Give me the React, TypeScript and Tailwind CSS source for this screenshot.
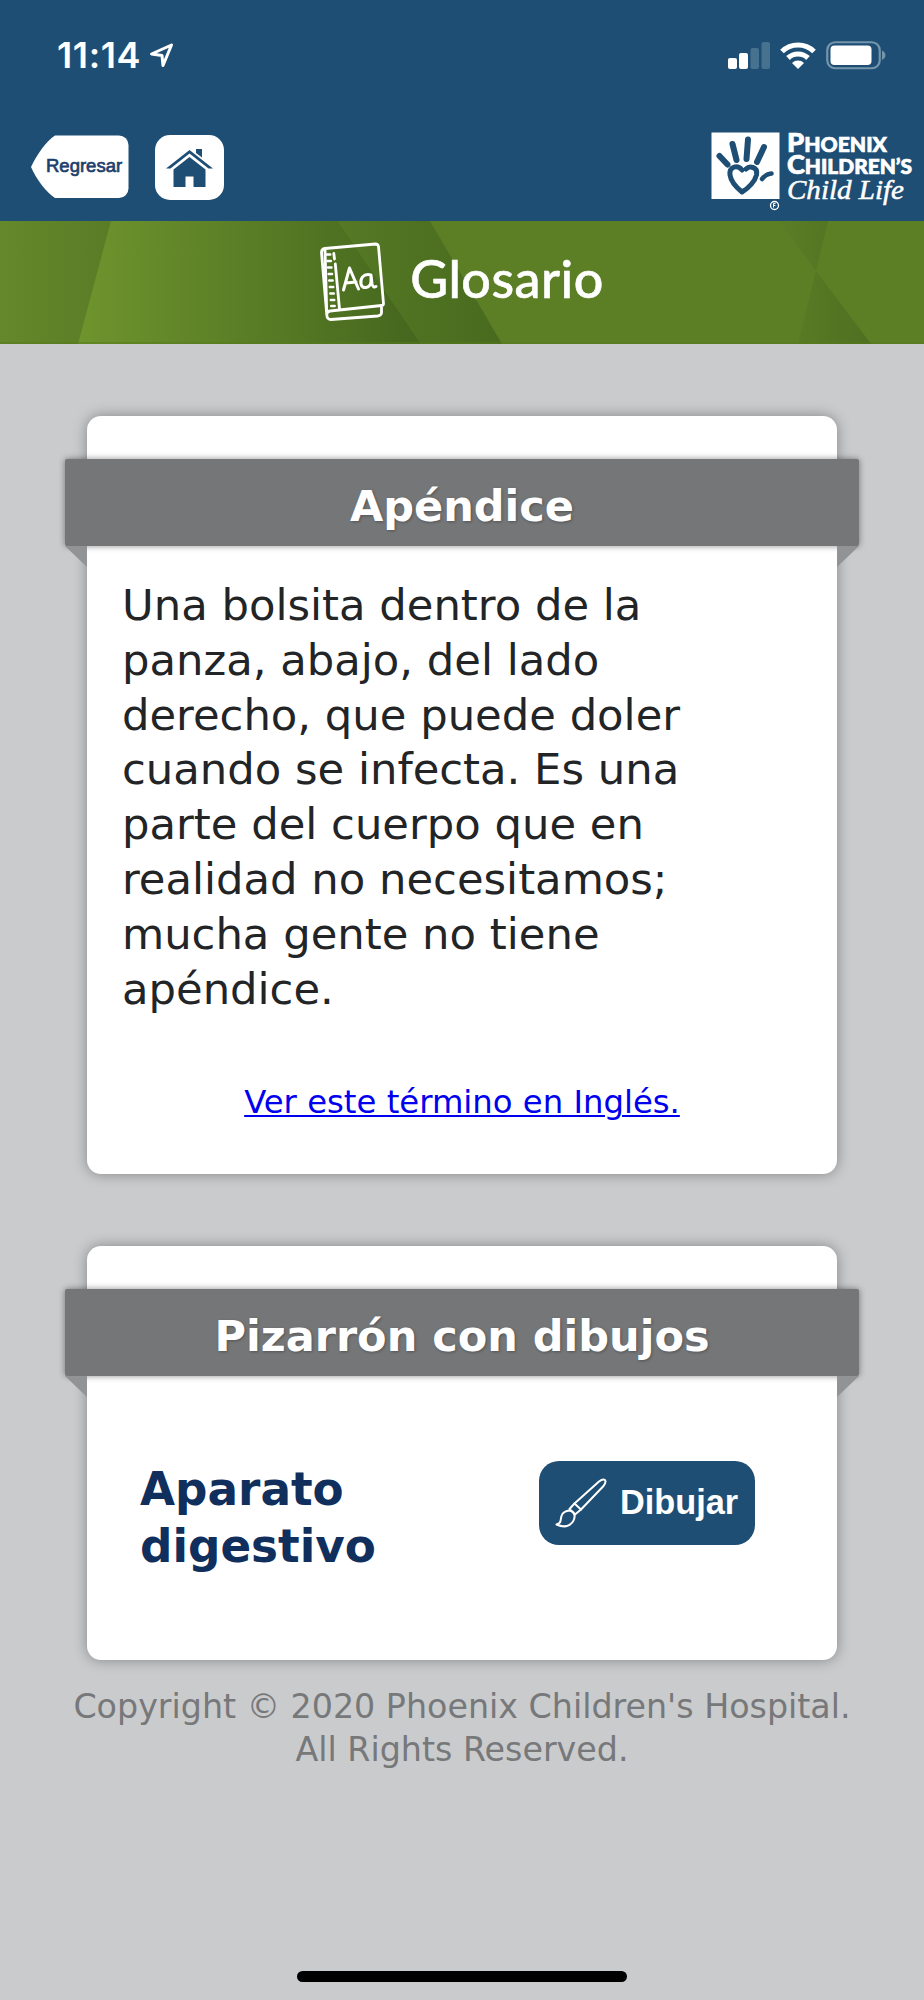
import type { ReactNode } from "react";

function StatusBar() {
  return (
    <div className="flex h-[110px] items-center justify-between pl-[57px] pr-[38px]">
      <div className="flex items-center gap-[8px]">
        <span className="w-[84px] whitespace-nowrap font-[Inter] text-[36px] font-semibold leading-none tracking-[0.600px]">11:14</span>
        <svg width="26" height="26" viewBox="0 0 26 26" fill="none" stroke="currentColor" strokeWidth="3" strokeLinejoin="round">
          <path d="M22.500 3 2.500 12 13 13.500 14 23.500Z" />
        </svg>
      </div>
      <div className="flex items-center gap-[10px]">
        <svg width="42" height="28" viewBox="0 0 42 28" fill="currentColor">
          <rect x="0" y="17" width="9" height="11" rx="2" />
          <rect x="11" y="12" width="9" height="16" rx="2" />
          <rect x="22.500" y="7" width="8.500" height="21" rx="2" fill="#47728f" />
          <rect x="33.500" y="1" width="8.500" height="27" rx="2" fill="#47728f" />
        </svg>
        <svg width="36" height="28" viewBox="0 0 36 28" fill="none" stroke="currentColor" strokeWidth="5.200">
          <path d="M2 10.500a23 23 0 0 1 32 0" />
          <path d="M8 17a14.500 14.500 0 0 1 20 0" />
          <path d="M12 22a8.500 8.500 0 0 1 12 0L18 28Z" fill="currentColor" stroke="none" />
        </svg>
        <svg width="60" height="30" viewBox="0 0 60 30" fill="none">
          <rect x="1.250" y="2.250" width="52.500" height="26" rx="8" stroke="#7495ab" strokeWidth="2.200" />
          <rect x="4.500" y="5.500" width="41" height="19.500" rx="4" fill="currentColor" />
          <path d="M56 10.500c4.500 2 4.500 7.500 0 9.500Z" fill="#7495ab" />
        </svg>
      </div>
    </div>
  );
}

function BackButton() {
  return (
    <div className="relative flex h-[64px] w-[98px] items-center">
      <svg className="absolute inset-0" width="98" height="64" viewBox="0 0 98 64" fill="#fff">
        <path d="M24 0.500H88a9.500 9.500 0 0 1 9.500 9.500V53.500a9.500 9.500 0 0 1-9.500 9.500H24C16 58 5 44 0 32 5 21 15 6 24 0.500Z" />
      </svg>
      <span className="relative pb-[2px] pl-[15px] font-['Liberation_Sans',sans-serif] text-[18.500px] leading-none text-[#1e3f6c] [-webkit-text-stroke:0.700px_#1e3f6c]">
        Regresar
      </span>
    </div>
  );
}

function HomeButton() {
  return (
    <div className="flex h-[65px] w-[69px] items-center justify-center rounded-[15px] bg-white">
      <svg width="47" height="38" viewBox="0 0 47 38" fill="#1f4e74">
        <path d="M23.500 1 0 19.500H4.500L23.500 4.500 42.500 19.500H47Z" />
        <path d="M30 0H36V8.500L30 4Z" />
        <path d="M23.500 8 7.500 20.500V38H19.500V27.500H27.500V38H39.500V20.500Z" />
      </svg>
    </div>
  );
}

function Logo() {
  return (
    <svg className="overflow-visible" width="206" height="80" viewBox="0 0 206 80" fill="#fff">
      <rect x="0.500" y="1.500" width="68" height="66.500" />
      <g fill="none" stroke="#1f4e74" strokeWidth="6" strokeLinecap="round" strokeLinejoin="round">
        <path d="M8.500 25 16.500 33.500" />
        <path d="M21.500 13 25.500 29" />
        <path d="M37 8.500 35.500 28" />
        <path d="M53 16 46 31" />
        <path d="M51 48q4-5 9.500-5.500" strokeWidth="4.500" />
        <path d="M31 39C26 33 18 36 19 44 20 51 26 57 31 61 38 57 44 50 45.500 44 47 35 38 35 35 38" strokeWidth="5" />
      </g>
      <circle cx="63.500" cy="74.500" r="4" fill="none" stroke="#fff" strokeWidth="1.300" />
      <path d="M62.500 76.500v-4h2M62.500 74.500h2" fill="none" stroke="#fff" />
      <g fontFamily="Lato, sans-serif" fontWeight="900" stroke="#fff" strokeWidth=".7">
        <text x="76" y="20.700" fontSize="26" textLength="100" lengthAdjust="spacingAndGlyphs">
          P<tspan fontSize="20">HOENIX</tspan>
        </text>
        <text x="76" y="42.700" fontSize="26" textLength="125" lengthAdjust="spacingAndGlyphs">
          C<tspan fontSize="20">HILDREN’S</tspan>
        </text>
      </g>
      <text x="76" y="68.200" fontSize="28" fontStyle="italic" fontFamily="'Liberation Serif', serif" stroke="#fff" strokeWidth=".5" textLength="117" lengthAdjust="spacingAndGlyphs">
        Child Life
      </text>
    </svg>
  );
}

function GlossaryIcon() {
  return (
    <svg width="66" height="80" viewBox="0 0 66 80" fill="none" stroke="#fff" strokeWidth="2.800" strokeLinecap="round" strokeLinejoin="round">
      <path d="M5 6.500 55.500 2q2.500 0 3 2.500L63.500 61.500q0 2-2 2L10 69q-3.500.5-3.200 4 .3 4.500 4.200 4.500L57.500 74q4.500-.5 4-4.500V65M6.800 73 1.500 10.500q0-3.500 3.500-4Z" />
      <path d="M13.800 11.500 14.500 17M15.300 22 19.500 67" />
      <path d="M6.800 12.500h3.500M7.400 19h3.500M8 25.500h3.500M8.600 32h3.500M9.200 38.500h3.500M9.800 45h3.500M10.300 51.500h3.500M10.800 58h3.500M11.200 64h3.500" strokeWidth="2.400" />
      <path d="M23.500 48 29.500 26 38.500 47M26 41 36 40" strokeWidth="3" />
      <path d="M51 33C43 31 40 37 41 42 42 47.500 50 46.500 51 40V33L52 42q1 4 4 2.500" strokeWidth="3" />
    </svg>
  );
}

function Banner() {
  return (
    <div className="relative flex h-[122.500px] w-full items-center justify-center bg-[#5c7e25]">
      <svg className="absolute inset-0" width="924" height="123" viewBox="0 0 924 123">
        <defs>
          <linearGradient id="a" gradientUnits="userSpaceOnUse" x1="0" x2="110" y1="0" y2="0">
            <stop stopColor="#64882a" />
            <stop offset="1" stopColor="#5a7c27" />
          </linearGradient>
          <linearGradient id="b" gradientUnits="userSpaceOnUse" x1="80" x2="420" y1="0" y2="0">
            <stop stopColor="#6e942d" />
            <stop offset="1" stopColor="#44661e" />
          </linearGradient>
          <linearGradient id="c" gradientUnits="userSpaceOnUse" x1="338" x2="502" y1="0" y2="0">
            <stop stopColor="#557925" />
            <stop offset="1" stopColor="#486a1e" />
          </linearGradient>
          <linearGradient id="d" gradientUnits="userSpaceOnUse" x1="780" x2="870" y1="0" y2="0">
            <stop stopColor="#5a7d26" />
            <stop offset="1" stopColor="#4e7021" />
          </linearGradient>
        </defs>
        <path d="M0 0H111L78 123H0Z" fill="url(#a)" />
        <path d="M111 0H338L421 123H78Z" fill="url(#b)" />
        <path d="M338 0H430L502 123H421Z" fill="url(#c)" />
        <path d="M779 0H828L816 50Z" fill="url(#d)" />
        <path d="M816 50 871 123H798Z" fill="url(#d)" />
        <path d="M0 122H924" stroke="#557a1a" />
      </svg>
      <div className="relative flex items-center gap-[24px]">
        <GlossaryIcon />
        <h1 className="pb-[9px] font-[Lato] text-[52px] font-medium leading-none tracking-[0.500px] text-white [-webkit-text-stroke:0.600px_#fff]">
          Glosario
        </h1>
      </div>
    </div>
  );
}

function Card({ title, className, children }: { title: string; className: string; children: ReactNode }) {
  return (
    <section className={`mx-[87px] rounded-[14px] bg-white pt-[43px] shadow-[0_0_14px_rgba(0,0,0,0.350)] ${className}`}>
      <div className="relative -mx-[22px]">
        <h2 className="h-[87px] rounded-[2px] bg-[#757678] text-center text-[43px] font-bold leading-[95px] text-white shadow-[0_0_6px_rgba(0,0,0,0.450)] [text-shadow:1px_1px_3px_rgba(0,0,0,0.300)]">
          {title}
        </h2>
        <div className="absolute left-0 top-full h-[21px] w-[22px] bg-[#929395] [clip-path:polygon(0_0,100%_0,100%_100%)]" />
        <div className="absolute right-0 top-full h-[21px] w-[22px] bg-[#929395] [clip-path:polygon(0_0,100%_0,0_100%)]" />
      </div>
      {children}
    </section>
  );
}

function BrushIcon() {
  return (
    <svg width="52" height="50" viewBox="0 0 52 50" fill="none" stroke="#fff" strokeWidth="2" strokeLinejoin="round" strokeLinecap="round">
      <path d="M19.500 25.500 44 3.500q4-3 6-1.500 1.500 2-1.500 6L26 31.500" />
      <path d="M19.500 25.500 26 31.500 20 36.500 14.500 31Z" />
      <path d="M14 32.500C6 34 6.500 38 5.500 43q-.5 2.500-4 3.500C8 49.500 14 49 18 43.500q2-3 1.500-6.500Q19 33 14 32.500Z" />
    </svg>
  );
}

export default function App() {
  return (
    <div className="flex h-[2000px] w-[924px] flex-col overflow-hidden bg-[#cacbcd] font-['DejaVu_Sans',Verdana,sans-serif]">
      <header className="h-[221px] bg-[#1f4e74] text-white">
        <StatusBar />
        <div className="flex items-start pl-[31px] pr-[7px] pt-[21px]">
          <div className="pt-[4px]">
            <BackButton />
          </div>
          <div className="ml-[26px] pt-[4px]">
            <HomeButton />
          </div>
          <div className="ml-auto">
            <Logo />
          </div>
        </div>
      </header>

      <Banner />

      <Card title="Apéndice" className="mt-[72.500px] h-[758px]">
        <p className="ml-[35px] mt-[32px] w-[610px] text-[43.300px] leading-[54.800px] text-[#222426]">
          Una bolsita dentro de la panza, abajo, del lado derecho, que puede doler cuando se infecta. Es una parte del
          cuerpo que en realidad no necesitamos; mucha gente no tiene apéndice.
        </p>
        <p className="mt-[64px] text-center text-[32.300px] leading-[44px]">
          <a href="#" className="text-[#0000ee] underline decoration-2 underline-offset-2">
            Ver este término en Inglés.
          </a>
        </p>
      </Card>

      <Card title="Pizarrón con dibujos" className="mt-[72px] h-[414px]">
        <div className="flex justify-between pl-[53px] pr-[82px] pt-[85px]">
          <h3 className="w-[300px] text-[45.300px] font-bold leading-[57px] text-[#102f5c]">Aparato digestivo</h3>
          <button className="flex h-[84px] w-[216px] items-center rounded-[20px] bg-[#1f4e74] pl-[16px]">
            <BrushIcon />
            <span className="ml-[13px] pb-[2px] font-['Liberation_Sans',sans-serif] text-[34.300px] font-bold leading-none text-white">
              Dibujar
            </span>
          </button>
        </div>
      </Card>

      <footer className="mt-[26px] text-center text-[33.300px] leading-[42.500px] text-[#77787a]">
        <p>Copyright © 2020 Phoenix Children's Hospital.</p>
        <p>All Rights Reserved.</p>
      </footer>

      <div className="mx-auto mb-[18px] mt-auto h-[11px] w-[330px] rounded-full bg-black" />
    </div>
  );
}
